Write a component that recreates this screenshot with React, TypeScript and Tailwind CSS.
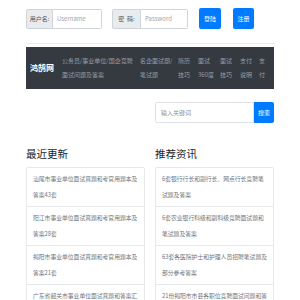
export default function App() {
  const font = { fontFamily: '"Noto Sans CJK SC", "Liberation Sans", sans-serif' };

  const navLinks = [
    { l1: '公务员/事业单位/国企竞聘', l2: '面试问题及答案', w: 'w-[78px]' },
    { l1: '名企面试题/', l2: '笔试题', w: 'w-[38px]' },
    { l1: '简历', l2: '技巧', w: 'w-[20px]' },
    { l1: '面试', l2: '360度', w: 'w-[22px]' },
    { l1: '面试', l2: '技巧', w: 'w-[20px]' },
    { l1: '支付', l2: '说明', w: 'w-[19px]' },
    { l1: '支', l2: '付', w: 'w-[10px]' },
  ];

  const latest = [
    '汕尾市事业单位面试真题和考官用题本及答案43套',
    '阳江市事业单位面试真题和考官用题本及答案28套',
    '揭阳市事业单位面试真题和考官用题本及答案21套',
    '广东省韶关市事业单位面试真题和答案汇编',
  ];

  const recommend = [
    '6套银行行长和副行长、网点行长竞聘笔试题及答案',
    '6套农业银行科级和副科级竞聘面试题和笔试题及答案',
    '63套各医院护士和护理人员招聘笔试题及部分参考答案',
    '21份揭阳市市县各职位竞聘面试问题和答案',
  ];

  return (
    <div className="min-h-[300px] bg-white" style={font}>
      <div className="mx-auto w-[248px]">
        {/* 登录栏 */}
        <div className="flex items-center pt-[8px] pb-[14px] border-b border-[#ececec]">
          <div className="flex h-[20px] w-[76px] text-[6px]">
            <span className="flex w-[27px] items-center justify-center rounded-l-[2px] border border-[#ced4da] bg-[#e9ecef] text-[#495057]">
              用户名:
            </span>
            <span className="flex flex-1 items-center rounded-r-[2px] border border-l-0 border-[#ced4da] pl-[4px] text-[#a0a5aa]">
              Username
            </span>
          </div>
          <div className="ml-[10px] flex h-[20px] w-[76px] text-[6px]">
            <span className="flex w-[29px] items-center justify-center rounded-l-[2px] border border-[#ced4da] bg-[#e9ecef] text-[#495057]">
              密&nbsp;&nbsp;码:
            </span>
            <span className="flex flex-1 items-center rounded-r-[2px] border border-l-0 border-[#ced4da] pl-[4px] text-[#a0a5aa]">
              Password
            </span>
          </div>
          <button className="ml-[11px] flex h-[21px] w-[22px] items-center justify-center rounded-[2px] bg-[#007bff] text-[6px] text-white">
            登陆
          </button>
          <button className="ml-[12px] flex h-[21px] w-[21px] items-center justify-center rounded-[2px] bg-[#007bff] text-[6px] text-white">
            注册
          </button>
        </div>

        {/* 导航 */}
        <div className="mt-[3px] flex h-[42px] items-center overflow-hidden bg-[#343a40] pl-[4px]">
          <span className="w-[32px] text-[8px] font-bold text-white">鸿鹄网</span>
          {navLinks.map((n, i) => (
            <div
              key={i}
              className={`${n.w} shrink-0 whitespace-nowrap text-[6px] leading-[14px] text-[#9a9da0]`}
            >
              {n.l1}
              <br />
              {n.l2}
            </div>
          ))}
        </div>

        <div className="mt-[13px] grid grid-cols-2 gap-x-[10px]">
          <div />
          <div className="flex h-[21px]">
            <span className="flex flex-1 items-center rounded-l-[2px] border border-[#dfe3e7] pl-[5px] text-[6px] text-[#8a9096]">
              输入关键词
            </span>
            <button className="flex w-[20px] items-center justify-center rounded-r-[2px] bg-[#007bff] text-[6px] text-white">
              搜索
            </button>
          </div>
        </div>

        <div className="mt-[24px] grid grid-cols-2 gap-x-[10px]">
          {[
            { title: '最近更新', items: latest },
            { title: '推荐资讯', items: recommend },
          ].map((col) => (
            <div key={col.title}>
              <div className="h-[14px] text-[10.5px] leading-[14px] text-[#212529]">{col.title}</div>
              <div className="mt-[6px] rounded-[2px] border border-[#e6e8eb]">
                {col.items.map((t, i) => (
                  <div
                    key={i}
                    className="border-b border-[#e6e8eb] px-[6px] py-[3px] text-[5.8px] leading-[16px] text-[#6c757d]"
                  >
                    {t}
                  </div>
                ))}
              </div>
            </div>
          ))}
        </div>
      </div>
    </div>
  );
}
